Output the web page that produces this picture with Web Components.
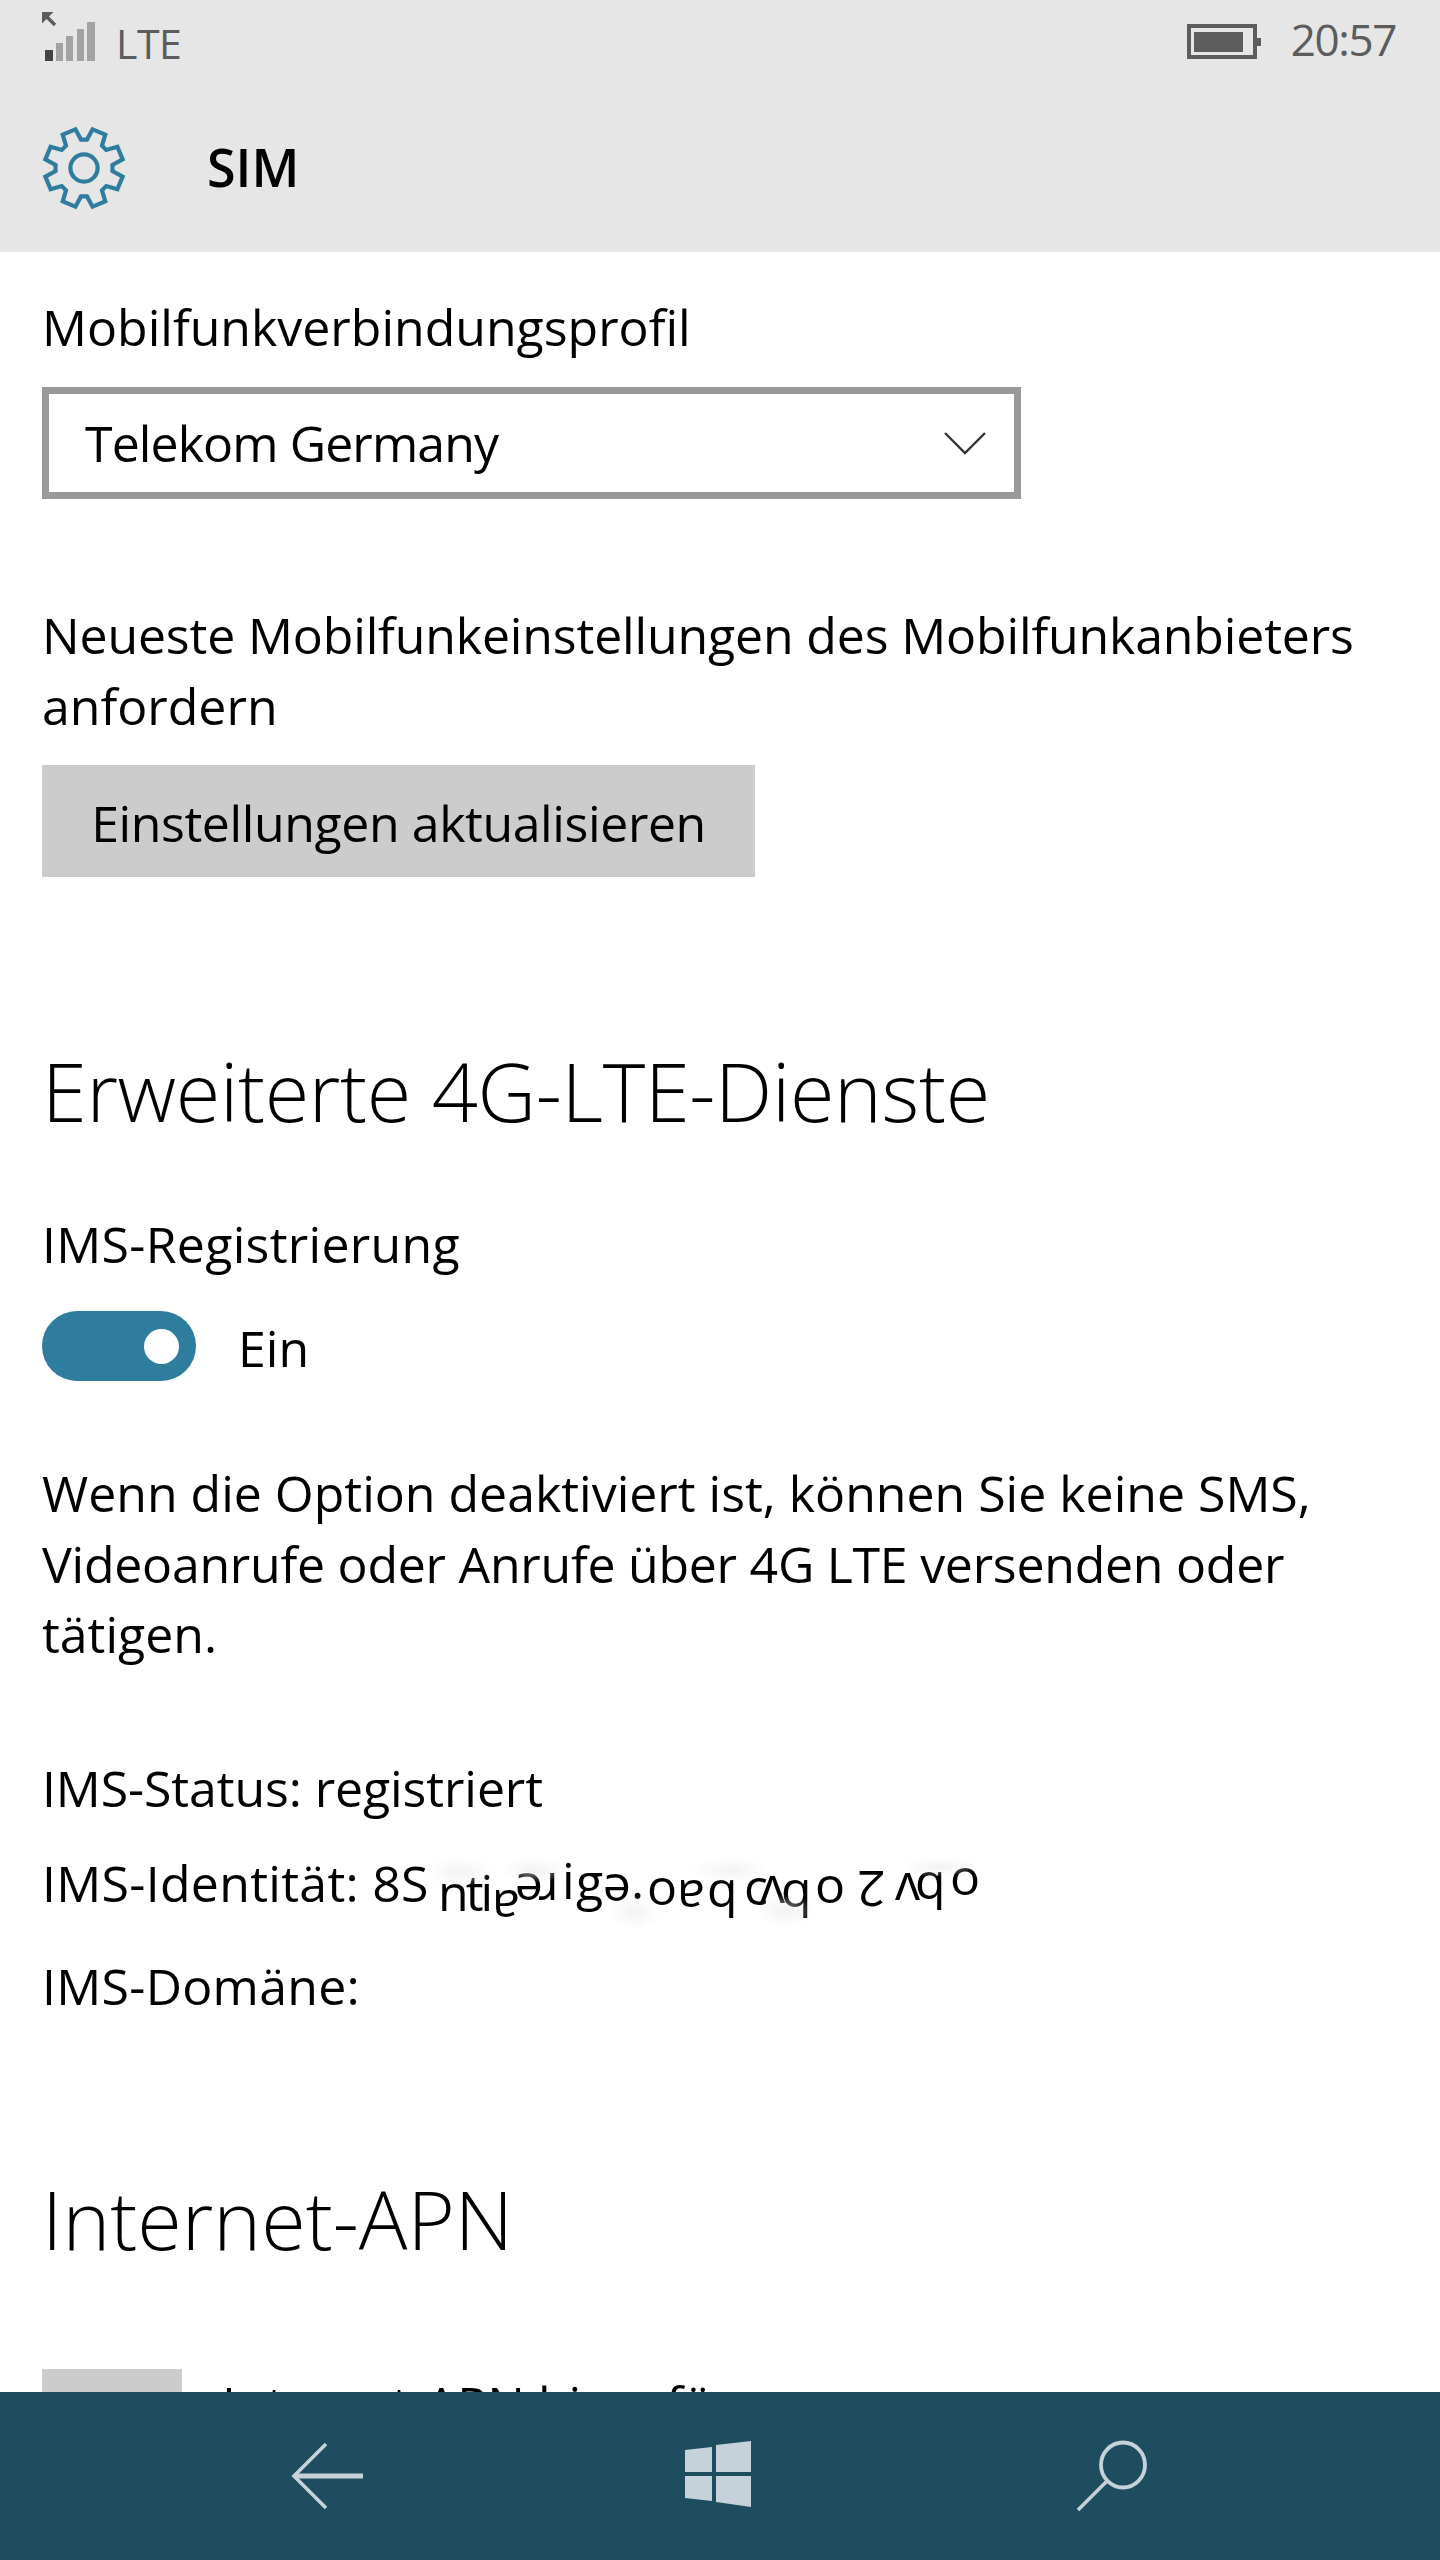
<!DOCTYPE html>
<html lang="de">
<head>
<meta charset="utf-8">
<title>SIM</title>
<style>
  html, body { margin: 0; background: #fff; }
  body { font: 50px/71px "Open Sans", sans-serif; color: #000; }
  .line { display: block; }
  .para .line { height: 70.5px; line-height: 70.5px; }
</style>
</head>
<body>
<sim-page>
  <status-bar slot="top" time="20:57" network="LTE"></status-bar>
  <page-header slot="top" title="SIM"></page-header>

  <text-line top="40">Mobilfunkverbindungsprofil</text-line>
  <combo-box value="Telekom Germany"></combo-box>

  <text-line top="101"><span class="line" style="letter-spacing:-.15px">Neueste Mobilfunkeinstellungen des Mobilfunkanbieters</span><span class="line">anfordern</span></text-line>
  <push-button>Einstellungen aktualisieren</push-button>

  <section-title top="164" spacing="-.33">Erweiterte 4G-LTE-Dienste</section-title>
  <text-line top="68" spacing=".3">IMS-Registrierung</text-line>
  <toggle-switch label="Ein"></toggle-switch>

  <text-line top="77" class="para"><span class="line">Wenn die Option deaktiviert ist, können Sie keine SMS,</span><span class="line" style="letter-spacing:-.25px">Videoanrufe oder Anrufe über 4G LTE versenden oder</span><span class="line">tätigen.</span></text-line>

  <text-line top="83" spacing="-.1">IMS-Status: registriert</text-line>
  <text-line top="24"><span style="letter-spacing:.3px">IMS-Identität: 8S</span><smeared-text></smeared-text></text-line>
  <text-line top="32" spacing=".3">IMS-Domäne:</text-line>

  <section-title top="147">Internet-APN</section-title>
  <add-row top="100">Internet-APN hinzufügen</add-row>

  <nav-bar slot="bottom"></nav-bar>
</sim-page>

<script>
const shadow = (el, html) => {
  el.attachShadow({ mode: 'open' })
  el.shadowRoot.innerHTML = html
}

customElements.define('sim-page', class extends HTMLElement {
  constructor () {
    super()
    shadow(this, `
<style>
  :host { display: flex; flex-direction: column; height: 2560px; overflow: hidden; }
  .scroll { flex: 1; min-height: 0; overflow: hidden; padding: 0 42px; }
</style>
<slot name="top"></slot>
<div class="scroll"><slot></slot></div>
<slot name="bottom"></slot>`)
  }
})

customElements.define('status-bar', class extends HTMLElement {
  constructor () {
    super()
    shadow(this, `
<style>
  :host { display: flex; height: 84px; padding: 0 44px 0 42px; background: #e6e6e6; color: #5c5c5c; font-size: 41px; line-height: 56px; box-sizing: border-box; }
  .signal { margin-top: 10px; }
  .net { margin: 15px 0 0 19px; letter-spacing: -.5px; }
  .battery { margin: 24px 0 0 auto; }
  .time { margin: 11px 0 0 30px; font-size: 44px; letter-spacing: -1.4px; }
</style>
<svg class="signal" width="55" height="54" viewBox="42 10 55 54">
  <path d="M43 13 55 25" stroke="#5c5c5c" stroke-width="3.4" fill="none"/>
  <path d="M42 12h11.5L42 23.5z" fill="#5c5c5c"/>
  <rect x="45" y="50" width="8" height="11" fill="#444"/>
  <rect x="56" y="43" width="7" height="18" fill="#a3a3a3"/>
  <rect x="66" y="36" width="7" height="25" fill="#a3a3a3"/>
  <rect x="77" y="29" width="7" height="32" fill="#a3a3a3"/>
  <rect x="87" y="22" width="8" height="39" fill="#a3a3a3"/>
</svg>
<span class="net">${this.getAttribute('network')}</span>
<svg class="battery" width="74" height="36" viewBox="0 0 74 36">
  <rect x="2" y="2" width="66" height="31" fill="none" stroke="#5d5d5d" stroke-width="4"/>
  <rect x="7" y="8" width="49" height="20" fill="#5d5d5d"/>
  <rect x="70" y="14" width="4" height="8" fill="#5d5d5d"/>
</svg>
<span class="time">${this.getAttribute('time')}</span>`)
  }
})

customElements.define('page-header', class extends HTMLElement {
  constructor () {
    super()
    // 8 teeth, centred on 22.5deg + 45deg * k
    const polar = (r, deg) => {
      const a = (deg - 90) * Math.PI / 180
      return `${(42 + r * Math.cos(a)).toFixed(2)} ${(42 + r * Math.sin(a)).toFixed(2)}`
    }
    let d = ''
    for (let k = 0; k < 8; k++) {
      const c = 22.5 + 45 * k
      d += `${k ? 'L' : 'M'}${polar(39.6, c - 10)}L${polar(39.6, c + 10)}L${polar(28.6, c + 16.5)}L${polar(28.6, c + 28.5)}`
    }
    shadow(this, `
<style>
  :host { display: flex; align-items: center; gap: 81px; height: 168px; padding-left: 42px; background: #e6e6e6; }
  h1 { margin: 0 0 3px; font-size: 52px; line-height: 71px; font-weight: 600; }
  svg { display: block; }
</style>
<svg width="84" height="84" viewBox="0 0 84 84" fill="none" stroke="#2e7d9e" stroke-width="4.2">
  <path d="${d}Z"/>
  <circle cx="42" cy="42" r="13.6"/>
</svg>
<h1>${this.getAttribute('title')}</h1>`)
  }
})

customElements.define('text-line', class extends HTMLElement {
  constructor () {
    super()
    shadow(this, `
<style>
  :host { display: block; position: relative; margin-top: ${this.getAttribute('top') || 0}px; letter-spacing: ${this.getAttribute('spacing') || 0}px; }
</style>
<slot></slot>`)
  }
})

customElements.define('section-title', class extends HTMLElement {
  constructor () {
    super()
    shadow(this, `
<style>
  :host { display: block; margin-top: ${this.getAttribute('top') || 0}px; font-size: 81px; line-height: 100px; font-weight: 300; letter-spacing: ${this.getAttribute('spacing') || 0}px; }
</style>
<slot></slot>`)
  }
})

customElements.define('combo-box', class extends HTMLElement {
  constructor () {
    super()
    shadow(this, `
<style>
  :host { display: flex; align-items: center; justify-content: space-between; width: 979px; height: 112px; margin-top: 24px; padding: 0 28px 0 36px; border: 7px solid #999; box-sizing: border-box; }
  span { letter-spacing: -.9px; }
  svg { display: block; }
</style>
<span>${this.getAttribute('value')}</span>
<svg width="42" height="24" viewBox="0 0 42 24" fill="none" stroke="#333" stroke-width="2.4"><path d="M1 2 21 22 41 2"/></svg>`)
  }
})

customElements.define('push-button', class extends HTMLElement {
  constructor () {
    super()
    shadow(this, `
<style>
  :host { display: flex; align-items: center; justify-content: center; width: 713px; height: 112px; padding-top: 5px; margin-top: 23px; background: #ccc; box-sizing: border-box; letter-spacing: -.4px; }
</style>
<slot></slot>`)
  }
})

customElements.define('toggle-switch', class extends HTMLElement {
  constructor () {
    super()
    shadow(this, `
<style>
  :host { display: flex; gap: 42px; height: 70px; margin-top: 31px; }
  .track { display: flex; align-items: center; justify-content: flex-end; width: 154px; height: 70px; padding-right: 17px; border-radius: 35px; background: #2e7d9e; box-sizing: border-box; }
  .knob { width: 35px; height: 35px; border-radius: 50%; background: #fff; }
  .label { margin-top: 2px; }
</style>
<div class="track"><div class="knob"></div></div>
<span class="label">${this.getAttribute('label')}</span>`)
  }
})

// damaged part of the IMS identity: pieces of upright and upside-down text with white smears over it
const SMEAR = [
  ['nti', 438, 1913, 0], ['a', 495, 1890, 1], ['e', 518, 1873, 1], ['r', 541, 1873, 1],
  ['i', 562, 1901, 0], ['g', 576, 1902, 0], ['e', 606, 1874, 1], ['.', 631, 1901, 0],
  ['o', 647, 1907, 0], ['a', 680, 1880, 1], ['b', 710, 1880, 1], ['c', 744, 1907, 0],
  ['v', 763, 1876, 1], ['b', 784, 1880, 1], ['o', 815, 1905, 0], ['2', 860, 1871, 1],
  ['v', 898, 1873, 1], ['b', 918, 1872, 1], ['o', 950, 1897, 0]
]
const BLURS = [[425, 1858, 70, 30], [500, 1858, 70, 26], [610, 1895, 50, 36], [690, 1858, 80, 26], [755, 1895, 60, 34], [900, 1858, 80, 20]]

customElements.define('smeared-text', class extends HTMLElement {
  constructor () {
    super()
    const glyphs = SMEAR.map(([t, x, y, flip]) =>
      `<span class="${flip ? 'flip' : ''}" style="left:${x - 42}px;top:${y - 1849 - 46}px">${t}</span>`).join('')
    const blurs = BLURS.map(([x, y, w, h]) =>
      `<i style="left:${x - 42}px;top:${y - 1849}px;width:${w}px;height:${h}px"></i>`).join('')
    shadow(this, `
<style>
  :host { position: absolute; inset: 0; pointer-events: none; letter-spacing: 0; }
  span { position: absolute; line-height: 52px; font-size: 50px; letter-spacing: -3px; transform-origin: 50% 46px; }
  .flip { transform: rotate(180deg); }
  i { position: absolute; background: radial-gradient(closest-side, rgba(235, 235, 235, .6), rgba(255, 255, 255, 0)); }
</style>
${glyphs}${blurs}`)
  }
})

customElements.define('add-row', class extends HTMLElement {
  constructor () {
    super()
    shadow(this, `
<style>
  :host { display: flex; gap: 40px; margin-top: ${this.getAttribute('top') || 0}px; }
  .plus { width: 140px; height: 140px; background: #ccc; }
</style>
<div class="plus"></div>
<slot></slot>`)
  }
})

customElements.define('nav-bar', class extends HTMLElement {
  constructor () {
    super()
    shadow(this, `
<style>
  :host { display: block; height: 168px; background: #1e4d60; position: relative; }
  svg { display: block; width: 1440px; height: 168px; }
</style>
<svg viewBox="0 2392 1440 168" fill="#c5d2d9">
  <path d="M326 2444 294 2476 326 2508" fill="none" stroke="#c5d2d9" stroke-width="3.6"/>
  <rect x="296" y="2473.5" width="67" height="5"/>
  <path d="M685 2450 712 2447V2472H685ZM716 2445 751 2441V2472H716ZM685 2476H712V2501L685 2498ZM716 2476H751V2507L716 2502Z"/>
  <ellipse cx="1123" cy="2465" rx="22" ry="22.5" fill="none" stroke="#c5d2d9" stroke-width="3.8"/>
  <path d="M1107 2481 1078 2510" fill="none" stroke="#c5d2d9" stroke-width="3.6"/>
</svg>`)
  }
})
</script>
</body>
</html>
